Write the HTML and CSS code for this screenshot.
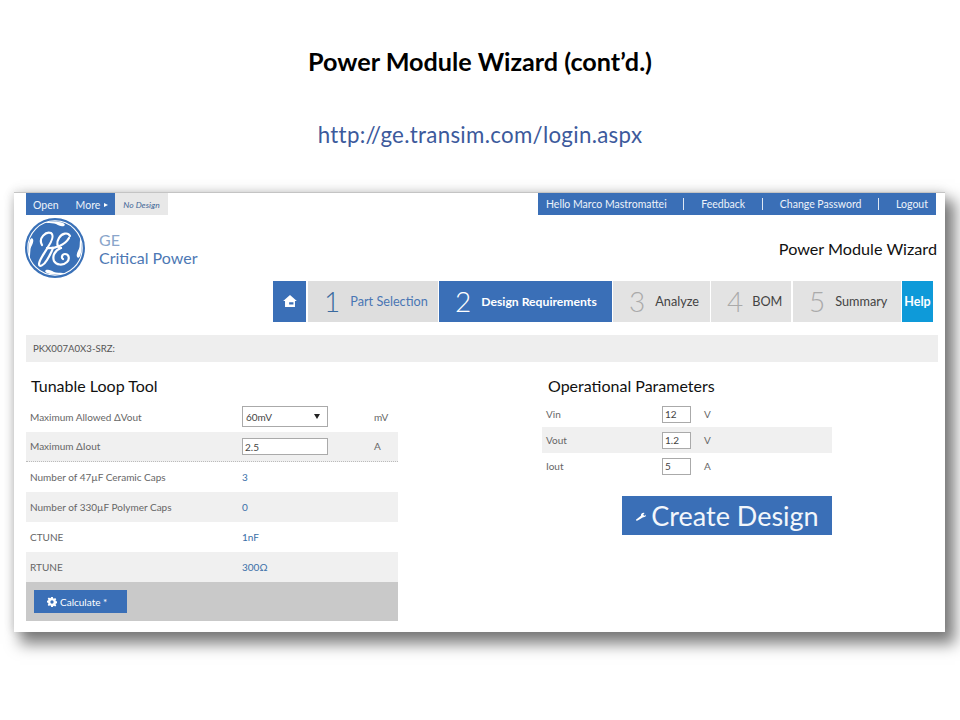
FILE: index.html
```html
<!DOCTYPE html>
<html lang="en">
<head>
<meta charset="utf-8">
<title>Power Module Wizard (cont’d.)</title>
<link rel="stylesheet" href="styles.css">
</head>
<body>
<main class="slide">
  <h1 class="slide-title">Power Module Wizard (cont’d.)</h1>
  <p class="slide-url">http://ge.transim.com/login.aspx</p>
  <section class="card">
    <div class="topbar">
      <div class="topbar-left">
        <div class="menu"><span>Open</span><span>More <i class="caret"></i></span></div>
        <div class="no-design">No Design</div>
      </div>
      <div class="user-menu">
        <span>Hello Marco Mastromattei</span><b></b><span>Feedback</span><b></b><span>Change Password</span><b></b><span>Logout</span>
      </div>
    </div>
    <header class="brand-row">
      <div class="brand">
        <svg class="logo" viewBox="0 0 60 60" aria-label="GE logo">
          <circle cx="30" cy="30" r="30" fill="#3a71b8"/>
          <circle cx="30" cy="30" r="27.2" fill="none" stroke="#fff" stroke-width="1.1"/>
          <g fill="#fff">
            <path d="M20 4.500c6-1.500 13-1.500 18 .5 3 1.200 2 3.500-1 3.300-3.500-.3-5-2.300-8-2.800-3-.5-6 0-9-1z"/>
            <path d="M40 55.500c-6 1.500-13 1.500-18-.5-3-1.200-2-3.500 1-3.300 3.500.3 5 2.300 8 2.800 3 .5 6 0 9 1z"/>
            <path d="M4.500 40c-1.500-6-1.500-13 .5-18 1.200-3 3.500-2 3.300 1-.3 3.500-2.300 5-2.800 8-.5 3 0 6-1 9z"/>
            <path d="M55.500 20c1.500 6 1.500 13-.5 18-1.200 3-3.500 2-3.300-1 .3-3.500 2.300-5 2.800-8 .5-3 0-6 1-9z"/>
          </g>
          <g fill="none" stroke="#fff" stroke-width="2.200" stroke-linecap="round">
            <path d="M17 27C13 20 21 13 26 15c3 2 1 8-3 14-4 7-9 13-9 17 0 4 5 1 8-4 3-5 5-9 6-12"/>
            <path d="M22 30c8 1 18-3 22-10"/>
            <path d="M45 18c-2-4-8-3-11 2-3 5-2 9 2 10"/>
            <path d="M36 30c-6 2-9 8-7 13 2 4 9 5 13 1 3-3 2-8-2-8-3 0-4 4-2 5"/>
          </g>
        </svg>
        <div class="brand-text"><span class="brand-ge">GE</span><span class="brand-name">Critical Power</span></div>
      </div>
      <div class="app-title">Power Module Wizard</div>
    </header>
    <nav class="steps">
      <div class="step home">
        <svg viewBox="0 0 16 14" width="14" height="12"><path fill="#fff" d="M8 0 0 7h2.200v7h11.600V7H16zM7 8.500h5V11H7z" fill-rule="evenodd"/></svg>
      </div>
      <div class="step step-1 done"><span class="num">1</span>Part Selection</div>
      <div class="step step-2 active"><span class="num">2</span>Design Requirements</div>
      <div class="step step-3"><span class="num">3</span>Analyze</div>
      <div class="step step-4"><span class="num">4</span>BOM</div>
      <div class="step step-5"><span class="num">5</span>Summary</div>
      <div class="step help">Help</div>
    </nav>
    <div class="part-bar">PKX007A0X3-SRZ:</div>
    <div class="columns">
      <section class="tool">
        <h2 class="heading">Tunable Loop Tool</h2>
        <div class="row">
          <span class="label">Maximum Allowed ΔVout</span>
          <div class="select">60mV<i class="select-caret"></i></div>
          <span class="unit">mV</span>
        </div>
        <div class="row alt dotted">
          <span class="label">Maximum ΔIout</span>
          <div class="field field-wide">2.5</div>
          <span class="unit">A</span>
        </div>
        <div class="row"><span class="label">Number of 47µF Ceramic Caps</span><span class="value">3</span></div>
        <div class="row alt"><span class="label">Number of 330µF Polymer Caps</span><span class="value">0</span></div>
        <div class="row"><span class="label">CTUNE</span><span class="value">1nF</span></div>
        <div class="row alt"><span class="label">RTUNE</span><span class="value">300Ω</span></div>
        <div class="actions">
          <div class="calc">
            <svg viewBox="0 0 24 24" width="10" height="10"><path fill="#fff" fill-rule="evenodd" d="M10 0h4l.7 3.200 2 .8 2.800-1.700 2.800 2.800-1.700 2.800.8 2 3.200.7v4l-3.200.7-.8 2 1.700 2.800-2.800 2.800-2.800-1.700-2 .8L14 24h-4l-.7-3.200-2-.8-2.800 1.700-2.800-2.800L3.400 16l-.8-2-3.200-.7v-4l3.200-.7.8-2-1.700-2.800 2.800-2.800 2.800 1.700 2-.8zM12 8a4 4 0 1 0 0 8 4 4 0 0 0 0-8z"/></svg>
            Calculate *
          </div>
        </div>
      </section>
      <section class="params">
        <h2 class="heading">Operational Parameters</h2>
        <div class="param"><span class="param-label">Vin</span><div class="field">12</div><span class="param-unit">V</span></div>
        <div class="param alt"><span class="param-label">Vout</span><div class="field">1.2</div><span class="param-unit">V</span></div>
        <div class="param"><span class="param-label">Iout</span><div class="field">5</div><span class="param-unit">A</span></div>
        <div class="create">
          <svg viewBox="0 0 12 12" width="11" height="11"><path fill="#fff" d="M1 10.500 6.500 6.200C6.300 4.500 7.600 3 9.500 3l1 .2L9 4.800l.6 1.200 1.500.2 1-1.500c.3 2-1.300 3.500-3.300 3.200L3 11.500 1.500 11.700z"/></svg>
          Create Design
        </div>
      </section>
    </div>
  </section>
</main>
</body>
</html>
```
FILE: styles.css
```css
* { box-sizing: border-box; }
html, body { margin: 0; background: #fff; }
body { font-family: "Lato", "Liberation Sans", sans-serif; }
.slide { width: 960px; height: 720px; overflow: hidden; padding-top: 45px; }
.slide-title { margin: 0; height: 32px; font: 700 25.200px/32px "Lato", sans-serif; color: #000; text-align: center; }
.slide-url { margin: 42px 0 0; height: 32px; font: 400 22.300px/32px "Lato", sans-serif; color: #3c5a9c; text-align: center; letter-spacing: .3px; }
.card {
  width: 931px; height: 440px; margin: 41px 0 0 14px; padding: 0 8px 0 12px;
  background: #fff; border-top: 1px solid #c4c4c4;
  box-shadow: 8px 10px 14px 2px rgba(0,0,0,.5), 0 -2px 12px rgba(0,0,0,.07), -2px 0 8px rgba(0,0,0,.07);
}
.topbar { display: flex; justify-content: space-between; height: 22px; font-size: 10.500px; color: #eef3fa; width: 910px; }
.topbar-left { display: flex; }
.menu { width: 89px; background: #3a6fb7; display: flex; align-items: center; gap: 17px; padding: 1px 0 0 7px; }
.caret { display: inline-block; border-left: 4px solid #fff; border-top: 2.500px solid transparent; border-bottom: 2.500px solid transparent; vertical-align: 2px; margin-left: 1px; }
.no-design { width: 53px; background: #e8e8e8; color: #3f6597; font-style: italic; font-size: 8.500px; display: flex; align-items: center; justify-content: center; padding-top: 1px; }
.user-menu { width: 398px; background: #3a6fb7; display: flex; align-items: center; justify-content: space-between; padding: 0 8px; }
.user-menu b { width: 1px; height: 12px; background: #dfe8f4; }
.brand-row { display: flex; justify-content: space-between; height: 66px; padding-top: 3px; width: 911px; }
.brand { display: flex; gap: 14px; margin-left: -1px; }
.logo { width: 60px; height: 60px; }
.brand-text { display: flex; flex-direction: column; padding-top: 13px; color: #4d78b4; font-size: 16px; line-height: 18px; }
.brand-ge { color: #8aa5cb; }
.app-title { font-size: 16.200px; color: #111; padding-top: 20px; line-height: 22px; }
.steps { display: flex; height: 41px; margin-left: 247px; gap: 1px; }
.step { display: flex; align-items: center; background: #e3e3e3; color: #444; font-size: 12.700px; padding-bottom: 1px; }
.num { font-size: 28px; font-weight: 300; color: #aaa; margin-right: 10px; line-height: 1; }
.home { width: 33px; margin-right: 1px; background: #3a6fb7; justify-content: center; }
.step-1 { width: 130px; padding-left: 16px; color: #4a76b4; background: #dedede; }
.step-1 .num { color: #3a6a9f; }
.step-2 { width: 173px; padding-left: 16px; color: #fff; background: #3a6fb7; font-weight: 700; font-size: 12.200px; }
.step-2 .num { color: #fff; font-weight: 300; }
.step-3 { width: 97px; padding-left: 16px; }
.step-4 { width: 80px; padding-left: 16px; }
.step-4 .num { margin-right: 9px; }
.step-5 { width: 108px; padding-left: 16px; margin-left: 1px; }
.help { width: 31px; background: #0e9ad9; color: #fff; font-weight: 700; justify-content: center; font-size: 12.500px; }
.part-bar { height: 27px; margin-top: 13px; width: 912px; background: #eee; color: #555; font-size: 9.600px; display: flex; align-items: center; padding-left: 7px; }
.columns { display: flex; gap: 144px; }
.tool { width: 372px; }
.params { width: 290px; display: flex; flex-direction: column; }
.heading { margin: 0; height: 40px; padding: 14px 0 0 5px; font-size: 16px; font-weight: 400; color: #111; line-height: 20px; }
.params .heading { padding-left: 6px; height: 39px; }
.row { display: grid; grid-template-columns: 212px 132px 1fr; align-items: center; height: 30px; padding: 0 0 1px 4px; font-size: 10px; color: #666; }
.alt { background: #f0f0f0; }
.dotted { border-bottom: 1px dotted #bbb; }
.value { color: #3a6fa8; }
.select { width: 86px; height: 21px; border: 1px solid #aaa; background: #fff; display: flex; align-items: center; justify-content: space-between; padding: 0 7px 0 3px; color: #444; }
.select-caret { border-top: 5px solid #222; border-left: 3px solid transparent; border-right: 3px solid transparent; }
.field { width: 29px; height: 17px; border: 1px solid #aaa; background: #fff; padding-left: 2px; font-size: 10px; line-height: 15px; color: #444; }
.field-wide { width: 86px; line-height: 17px; }
.actions { height: 39px; background: #c9c9c9; padding: 8px; }
.calc { width: 93px; height: 23px; background: #3a6fb7; color: #fff; font-size: 10px; display: flex; align-items: center; gap: 3px; padding-left: 13px; }
.param { display: grid; grid-template-columns: 116px 42px 1fr; align-items: center; height: 26px; padding-left: 4px; font-size: 10px; color: #666; }
.create { align-self: flex-end; width: 210px; height: 39px; margin-top: 16.500px; background: #3a6fb7; color: #f2f6fb; font-size: 27px; display: flex; align-items: center; justify-content: center; gap: 5px; }
```
